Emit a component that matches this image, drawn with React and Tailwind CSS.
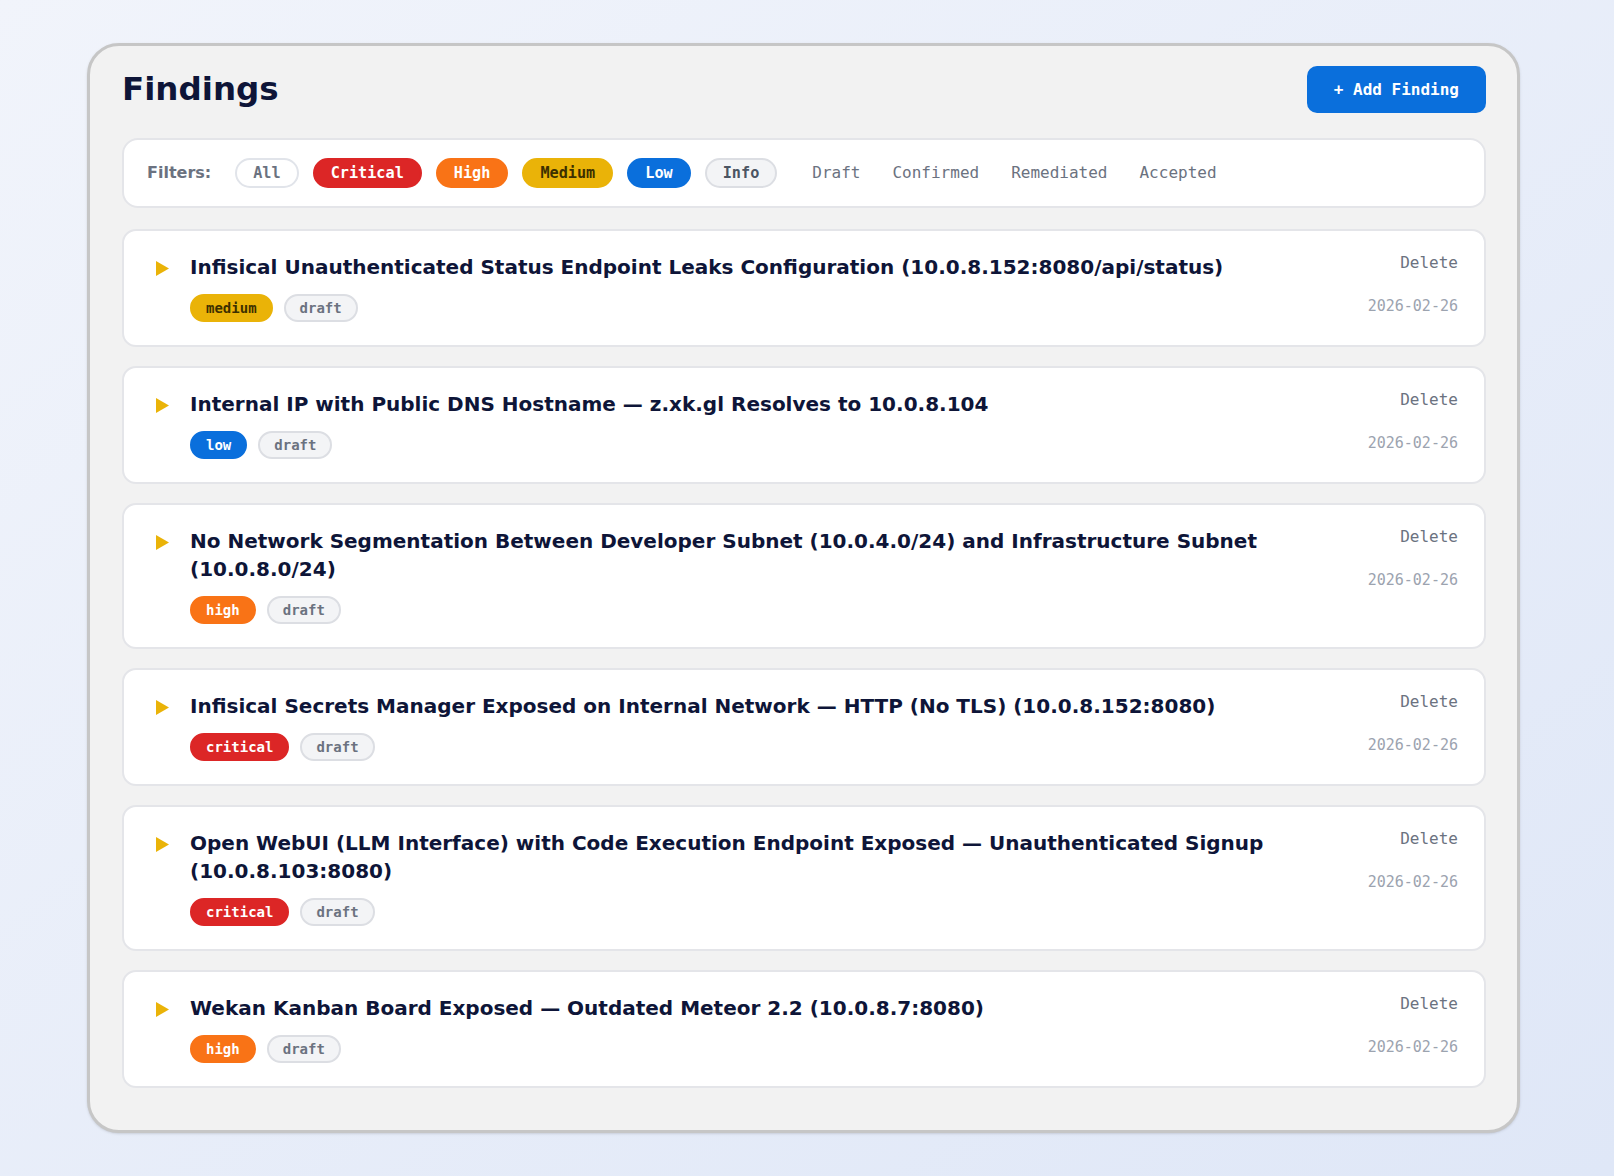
import React from 'react'

const findings = [
  {
    id: 1,
    title: 'Infisical Unauthenticated Status Endpoint Leaks Configuration (10.0.8.152:8080/api/status)',
    severity: 'medium',
    status: 'draft',
    date: '2026-02-26',
  },
  {
    id: 2,
    title: 'Internal IP with Public DNS Hostname — z.xk.gl Resolves to 10.0.8.104',
    severity: 'low',
    status: 'draft',
    date: '2026-02-26',
  },
  {
    id: 3,
    title: 'No Network Segmentation Between Developer Subnet (10.0.4.0/24) and Infrastructure Subnet (10.0.8.0/24)',
    severity: 'high',
    status: 'draft',
    date: '2026-02-26',
  },
  {
    id: 4,
    title: 'Infisical Secrets Manager Exposed on Internal Network — HTTP (No TLS) (10.0.8.152:8080)',
    severity: 'critical',
    status: 'draft',
    date: '2026-02-26',
  },
  {
    id: 5,
    title: 'Open WebUI (LLM Interface) with Code Execution Endpoint Exposed — Unauthenticated Signup (10.0.8.103:8080)',
    severity: 'critical',
    status: 'draft',
    date: '2026-02-26',
  },
  {
    id: 6,
    title: 'Wekan Kanban Board Exposed — Outdated Meteor 2.2 (10.0.8.7:8080)',
    severity: 'high',
    status: 'draft',
    date: '2026-02-26',
  },
]

const severityStyles = {
  critical: 'bg-[#dc2626] border-[#dc2626] text-white',
  high: 'bg-[#f97316] border-[#f97316] text-white',
  medium: 'bg-[#eab308] border-[#eab308] text-[#3d3000]',
  low: 'bg-[#0a6fdc] border-[#0a6fdc] text-white',
  info: 'bg-[#f3f4f6] border-[#dcdee3] text-[#4b5563]',
}

const severityFilters = [
  { label: 'All', cls: 'bg-white border-[#e1e4ea] text-[#6b7280]' },
  { label: 'Critical', cls: severityStyles.critical },
  { label: 'High', cls: severityStyles.high },
  { label: 'Medium', cls: severityStyles.medium },
  { label: 'Low', cls: severityStyles.low },
  { label: 'Info', cls: severityStyles.info },
]

const statusFilters = ['Draft', 'Confirmed', 'Remediated', 'Accepted']

const sans = "font-['DejaVu_Sans',sans-serif]"
const mono = "font-['DejaVu_Sans_Mono',monospace]"

function Caret() {
  return (
    <div className="flex h-[28px] w-[13px] shrink-0 items-center pt-[2px] mr-[21px]">
      <svg width="13" height="15" viewBox="0 0 13 15">
        <polygon points="0,0 13,7.5 0,15" fill="#eab308" />
      </svg>
    </div>
  )
}

function FindingCard({ finding }) {
  return (
    <div className="flex items-start rounded-[14px] border-2 border-[#e4e5e9] bg-white pl-[32px] pr-[26px] pt-[22px] pb-[23px]">
      <Caret />
      <div className="min-w-0 flex-1">
        <h2 className={`${sans} text-[20px] font-bold leading-[28px] text-[#0e1538]`}>{finding.title}</h2>
        <div className="mt-[13px] flex gap-[11px]">
          <span
            className={`${mono} rounded-full border-2 px-[14px] py-[2px] text-[14px] font-bold leading-[20px] ${severityStyles[finding.severity]}`}
          >
            {finding.severity}
          </span>
          <span
            className={`${mono} rounded-full border-2 border-[#dcdee3] bg-[#f3f4f6] px-[14px] py-[2px] text-[14px] font-bold leading-[20px] text-[#6b7280]`}
          >
            {finding.status}
          </span>
        </div>
      </div>
      <div className={`${mono} ml-6 -mt-[2px] flex shrink-0 flex-col items-end`}>
        <button className="text-[16px] leading-[24px] text-[#6b7280]">Delete</button>
        <span className="mt-[21px] text-[15px] leading-[20px] text-[#9ca3af]">{finding.date}</span>
      </div>
    </div>
  )
}

export default function App() {
  return (
    <div className="min-h-screen w-full bg-gradient-to-br from-[#f1f4fb] to-[#dfe7f7] pl-[87px] pt-[43px] pb-[43px]">
      <div className="w-[1433px] rounded-[32px] border-[3px] border-[#c6c6c6] bg-[#f2f2f2] pl-[32px] pr-[31px] pt-[20px] pb-[42px] shadow-sm">
        <div className="flex h-[47px] items-center justify-between">
          <h1 className={`${sans} text-[32.5px] font-bold leading-none text-[#0e1538]`}>Findings</h1>
          <button
            className={`${mono} h-[47px] rounded-[10px] bg-[#0a6fdc] px-[27px] text-[16px] font-bold text-white`}
          >
            + Add Finding
          </button>
        </div>

        <div className="mt-[25px] flex items-center gap-[14px] rounded-[16px] border-2 border-[#e4e5e9] bg-white py-[18px] pl-[23px] pr-6">
          <span className={`${sans} mr-[10px] text-[16px] font-bold text-[#6b7280]`}>Filters:</span>
          {severityFilters.map((f) => (
            <button
              key={f.label}
              className={`${mono} rounded-full border-2 px-[16px] py-[2px] text-[15.2px] font-bold leading-[22px] ${f.cls}`}
            >
              {f.label}
            </button>
          ))}
          <div className="ml-[12px] flex items-center gap-[14px]">
            {statusFilters.map((s) => (
              <button
                key={s}
                className={`${mono} rounded-full border-2 border-transparent px-[7px] py-[2px] text-[16px] leading-[22px] text-[#6b7280]`}
              >
                {s}
              </button>
            ))}
          </div>
        </div>

        <div className="mt-[21px] flex flex-col gap-[19px]">
          {findings.map((f) => (
            <FindingCard key={f.id} finding={f} />
          ))}
        </div>
      </div>
    </div>
  )
}
